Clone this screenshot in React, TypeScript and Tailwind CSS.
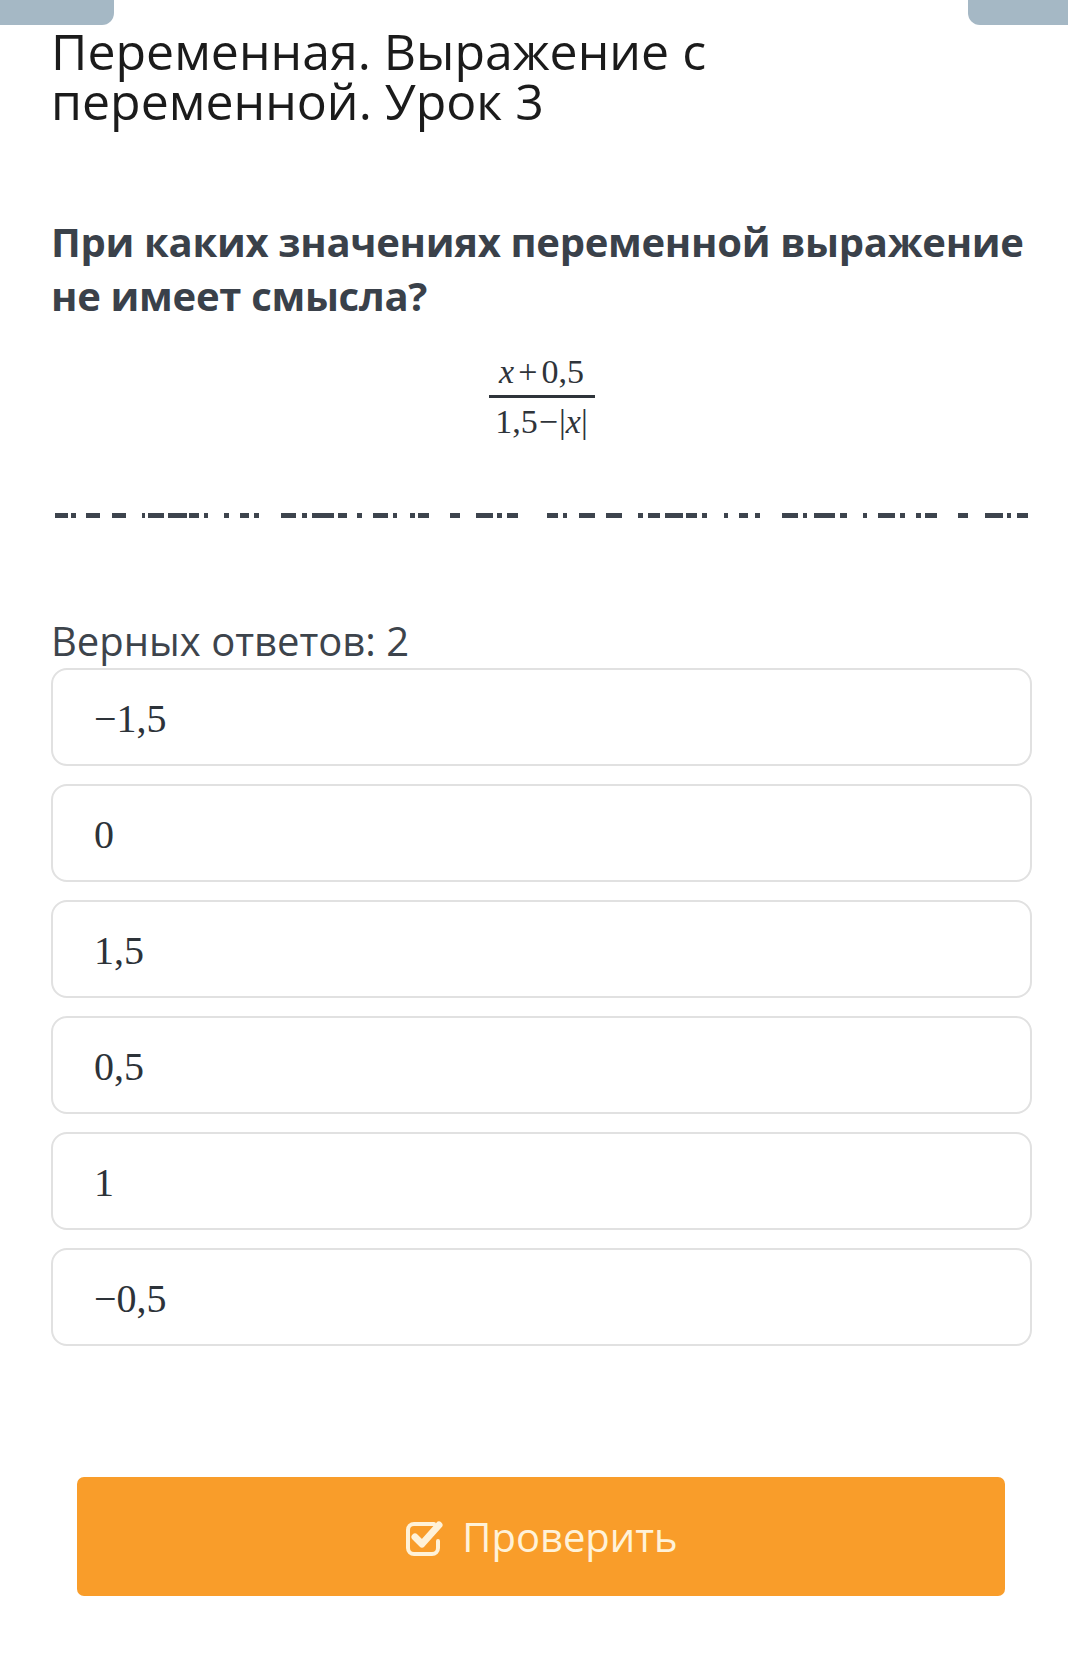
const sans = { fontFamily: '"Open Sans", "Noto Sans", sans-serif' };
const serif = { fontFamily: '"Liberation Serif", "DejaVu Serif", serif' };

const options = ['−1,5', '0', '1,5', '0,5', '1', '−0,5'];

// dark dashes of the broken input line, x ranges in page px
const dashes: [number, number][] = [
  [55, 68], [71, 76], [86, 100], [112, 126], [142, 145], [148, 164], [168, 187], [189, 199],
  [204, 208], [224, 229], [240, 249], [254, 259], [281, 296], [302, 307], [312, 334], [338, 347],
  [357, 362], [373, 388], [393, 397], [410, 415], [418, 429], [450, 460], [476, 493], [497, 502],
  [507, 518],
  [547, 558], [563, 567], [579, 595], [606, 622], [638, 643], [648, 660], [665, 683], [686, 697],
  [702, 707], [724, 728], [739, 748], [755, 760], [782, 798], [803, 807], [814, 835], [840, 847],
  [863, 867], [878, 895], [900, 905], [916, 921], [925, 937], [958, 968], [985, 1003], [1007, 1011],
  [1017, 1028],
];

function CheckSquare() {
  return (
    <svg width="42" height="40" viewBox="0 0 42 40" fill="none" stroke="currentColor">
      <path d="M30 7 H10 A6 6 0 0 0 4 13 V31 A6 6 0 0 0 10 37 H28 A6 6 0 0 0 34 31 V24" strokeWidth="4" strokeLinecap="round" />
      <path d="M11 20 L18 27 L35 8" strokeWidth="7" strokeLinecap="round" strokeLinejoin="round" />
    </svg>
  );
}

function Fraction() {
  return (
    <div className="mt-[28px] flex justify-center text-[#2f343a]" style={serif}>
      <div className="flex flex-col items-center">
        <div className="h-[41px] px-[6px] text-[34px] leading-[41px] whitespace-nowrap">
          <i>x</i>
          <span className="mx-[4px]">+</span>0,5
        </div>
        <div className="mt-[3px] h-[3px] w-[106px] bg-[#2f343a]" />
        <div className="mt-[2px] h-[44px] text-[34px] leading-[44px] whitespace-nowrap">
          1,5<span className="mx-[1px]">−</span>|<i>x</i>|
        </div>
      </div>
    </div>
  );
}

export default function App() {
  return (
    <div className="min-h-[1671px] w-[1068px] bg-white" style={sans}>
      <div className="flex h-[25px] justify-between">
        <div className="h-[25px] w-[114px] rounded-br-[12px] bg-[#a5b8c5]" />
        <div className="h-[25px] w-[100px] rounded-bl-[12px] bg-[#a5b8c5]" />
      </div>

      <div className="pl-[51px] pr-[36px]">
        <h1 className="mt-[1px] text-[50px] leading-[50px] font-normal text-[#1b1b1b]">
          Переменная. Выражение с
          <br />
          переменной. Урок 3
        </h1>

        <p className="mt-[89px] text-[40px] leading-[54px] font-bold tracking-[-0.3px] text-[#3a414a]">
          При каких значениях переменной выражение не имеет смысла?
        </p>

        <Fraction />

        <svg className="mt-[69px] block" width="981" height="5" viewBox="51 0 981 5">
          {dashes.map(([a, b], i) => (
            <rect key={i} x={a} y={0} width={b - a} height={5} fill="#3d444d" />
          ))}
        </svg>

        <p className="mt-[96px] text-[40px] leading-[54px] text-[#3d444c]">Верных ответов: 2</p>

        <div className="flex flex-col gap-[18px]">
          {options.map((o) => (
            <div
              key={o}
              className="flex h-[98px] items-center rounded-[16px] border-2 border-[#e1e1e1] pl-[41px] pt-[3px] text-[40px] text-[#2d3339]"
              style={serif}
            >
              {o}
            </div>
          ))}
        </div>

        <div className="mt-[131px] pl-[26px] pr-[27px]">
          <button className="flex h-[119px] w-full items-center justify-center gap-[16px] rounded-[7px] bg-[#f99d2a] text-[40px] text-[#fff2d8]">
            <CheckSquare />
            <span>Проверить</span>
          </button>
        </div>
      </div>
    </div>
  );
}
